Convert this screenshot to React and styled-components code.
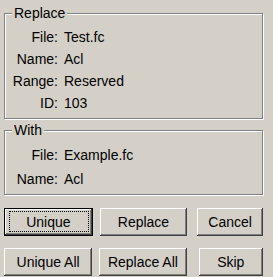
import React from 'react'
import styled, { createGlobalStyle, css } from 'styled-components'

const GlobalStyle = createGlobalStyle`
    html, body {
        margin: 0;
        background: #d4d0c8;
    }
    body {
        font-family: "Liberation Sans", Arial, sans-serif;
        font-size: 14px;
        color: #000;
    }
`

const Dialog = styled.div`
    padding: 13px 10px 0 4px;
`

const GroupBox = styled.div`
    position: relative;
    border: 1px solid #808080;
    box-shadow: 1px 1px 0 #fff, inset 1px 1px 0 #fff;
    padding: ${p => p.$pad};
    margin-top: ${p => p.$gap || 0}px;
`

const Legend = styled.span`
    position: absolute;
    top: -9px;
    left: 7px;
    padding: 0 2px;
    line-height: 16px;
    background: #d4d0c8;
`

const Fields = styled.div`
    display: grid;
    grid-template-columns: 53px auto;
    grid-auto-rows: ${p => p.$row}px;
    column-gap: 6px;
    align-items: center;
`

const Label = styled.span`
    text-align: right;
    line-height: 16px;
`

const Value = styled.span`
    line-height: 16px;
`

const ButtonRow = styled.div`
    display: flex;
    margin-top: ${p => p.$gap}px;
`

const bevel = css`
    box-shadow: inset -1px -1px 0 #404040, inset 1px 1px 0 #fff,
        inset -2px -2px 0 #808080, inset 2px 2px 0 #d4d0c8;
`

const Button = styled.button`
    position: relative;
    box-sizing: border-box;
    width: ${p => p.$w}px;
    height: 28px;
    margin-left: ${p => p.$ml || 0}px;
    padding: 0;
    background: #d4d0c8;
    border: none;
    font: inherit;
    color: #000;
    ${bevel}

    ${p => p.$default && css`
        border: 1px solid #000;
        &::after {
            content: '';
            position: absolute;
            top: 2px;
            left: 4px;
            right: 3px;
            bottom: 3px;
            border: 1px dotted #000;
        }
    `}
`

const Group = ({ title, rows, rowHeight, pad, gap }) => (
    <GroupBox $pad={pad} $gap={gap}>
        <Legend>{title}</Legend>
        <Fields $row={rowHeight}>
            {rows.map(([k, v]) => (
                <React.Fragment key={k}>
                    <Label>{k}:</Label>
                    <Value>{v}</Value>
                </React.Fragment>
            ))}
        </Fields>
    </GroupBox>
)

const App = () => {
    return (
        <Dialog>
            <GlobalStyle />
            <Group
                title="Replace"
                rowHeight={22}
                pad="12px 0 4px"
                rows={[
                    ['File', 'Test.fc'],
                    ['Name', 'Acl'],
                    ['Range', 'Reserved'],
                    ['ID', '103'],
                ]}
            />
            <Group
                title="With"
                rowHeight={24}
                pad="12px 0 3px"
                gap={11}
                rows={[
                    ['File', 'Example.fc'],
                    ['Name', 'Acl'],
                ]}
            />
            <ButtonRow $gap={13}>
                <Button $w={89} $default>Unique</Button>
                <Button $w={88} $ml={7}>Replace</Button>
                <Button $w={66} $ml={10}>Cancel</Button>
            </ButtonRow>
            <ButtonRow $gap={12}>
                <Button $w={89}>Unique All</Button>
                <Button $w={88} $ml={7}>Replace All</Button>
                <Button $w={65} $ml={12}>Skip</Button>
            </ButtonRow>
        </Dialog>
    )
}

export default App
